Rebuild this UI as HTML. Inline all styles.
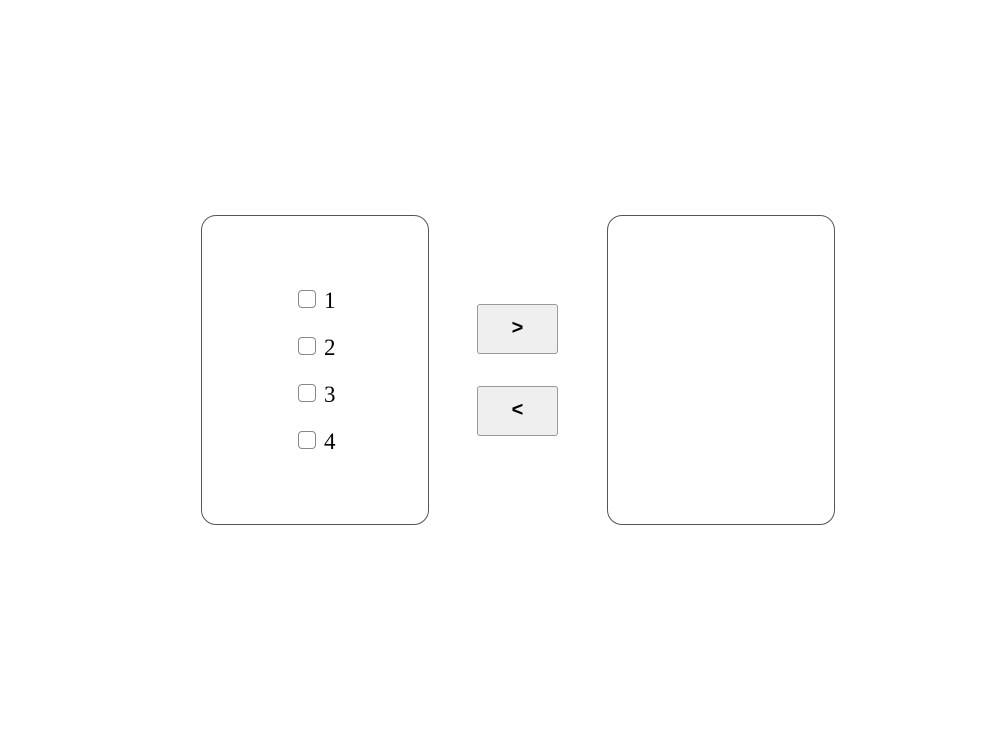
<!DOCTYPE html>
<html><head><style>
body{margin:0;width:997px;height:752px;background:#fff;position:relative;font-family:"Liberation Serif",serif;}
.box{position:absolute;top:215px;width:226px;height:308px;border:1px solid #555;border-radius:15px;}
.cb{position:absolute;left:298px;width:16px;height:16px;border:1.5px solid #888;border-radius:4px;background:#fff;}
.lb{position:absolute;left:324px;font-size:23px;line-height:24px;color:#000;}
.btn{position:absolute;left:477px;border:1px solid #999;border-radius:3px;background:#efefef;font-family:"Liberation Sans",sans-serif;font-size:20px;font-weight:bold;text-align:center;line-height:46px;color:#000;box-sizing:border-box;width:81px;height:50px;}
</style></head><body>
<div class="box" style="left:201px"></div>
<div class="box" style="left:607px"></div>
<div class="cb" style="top:290px"></div><div class="lb" style="top:289px">1</div>
<div class="cb" style="top:337px"></div><div class="lb" style="top:336px">2</div>
<div class="cb" style="top:384px"></div><div class="lb" style="top:383px">3</div>
<div class="cb" style="top:431px"></div><div class="lb" style="top:430px">4</div>
<div class="btn" style="top:304px">&gt;</div>
<div class="btn" style="top:386px">&lt;</div>
</body></html>
